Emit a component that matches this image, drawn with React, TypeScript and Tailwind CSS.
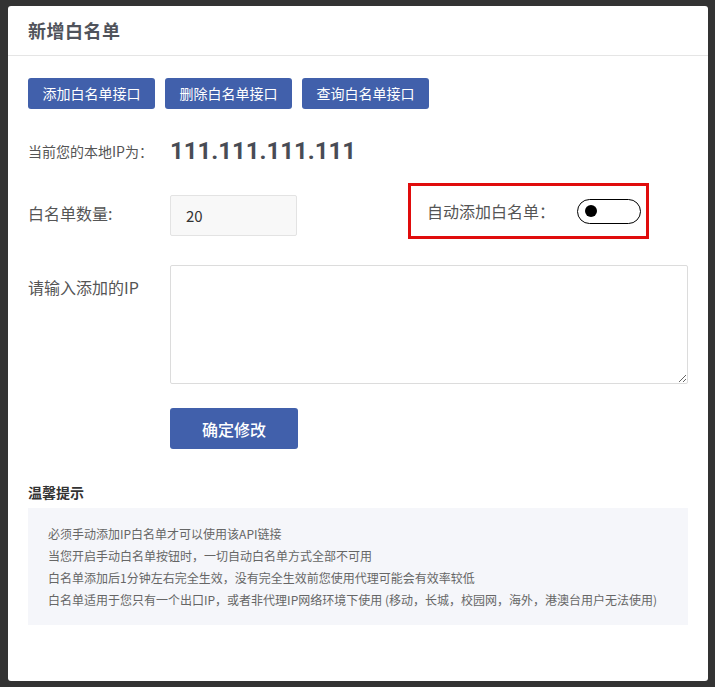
import { useState } from 'react';

const FONT = { fontFamily: '"Microsoft YaHei", "Noto Sans CJK SC", "Noto Sans", sans-serif' };

const API_BUTTONS = ['添加白名单接口', '删除白名单接口', '查询白名单接口'];

const TIPS = [
  '必须手动添加IP白名单才可以使用该API链接',
  '当您开启手动白名单按钮时，一切自动白名单方式全部不可用',
  '白名单添加后1分钟左右完全生效，没有完全生效前您使用代理可能会有效率较低',
  '白名单适用于您只有一个出口IP，或者非代理IP网络环境下使用 (移动，长城，校园网，海外，港澳台用户无法使用)',
];

function Toggle({ on, onChange }: { on: boolean; onChange: (v: boolean) => void }) {
  return (
    <button
      type="button"
      onClick={() => onChange(!on)}
      className={`flex items-center w-[64px] h-[25px] rounded-full border-[1.5px] border-black bg-white px-[7px] ${on ? 'justify-end' : 'justify-start'}`}
    >
      <span className="block w-[12px] h-[12px] rounded-full bg-black" />
    </button>
  );
}

export default function App() {
  const [count, setCount] = useState('20');
  const [auto, setAuto] = useState(false);
  const [ips, setIps] = useState('');

  return (
    <div className="w-[715px] h-[687px] bg-[#333333] pt-[6px] pl-[8px] overflow-hidden" style={FONT}>
      <div className="w-[700px] h-[675px] bg-white rounded-[3px]">
        {/* Header */}
        <div className="h-[50px] flex items-center px-[20px] border-b border-[#e5e5e5]">
          <h2 className="text-[18px] font-bold text-[#50535b] tracking-[0.5px]">新增白名单</h2>
        </div>

        <div className="px-[20px]">
          {/* API buttons */}
          <div className="flex gap-[10px] pt-[22px]">
            {API_BUTTONS.map(label => (
              <button
                key={label}
                type="button"
                className="w-[127px] h-[31px] rounded-[3px] bg-[#4160ab] text-white text-[14px]"
              >
                {label}
              </button>
            ))}
          </div>

          {/* Local IP */}
          <div className="flex items-center h-[42px] mt-[21px]">
            <span className="w-[142px] text-[14px] text-[#555]">当前您的本地IP为：</span>
            <span className="text-[24px] font-bold text-[#484c55]" style={{ fontFamily: 'Roboto, "Noto Sans", sans-serif' }}>
              111.111.111.111
            </span>
          </div>

          {/* Count + auto switch */}
          <div className="flex h-[56px] mt-[11px]">
            <span className="w-[142px] self-center text-[16px] text-[#555] mt-[4px]">白名单数量:</span>
            <input
              value={count}
              onChange={e => setCount(e.target.value)}
              className="w-[127px] h-[41px] mt-[12px] px-[15px] bg-[#f8f8f8] border border-[#e3e3e3] rounded-[2px] text-[15px] text-[#333] outline-none"
            />
            <div className="ml-[111px] w-[241px] h-[56px] border-[3px] border-[#e00c0c] flex items-center pl-[16px] gap-[22px]">
              <span className="text-[16px] text-[#555]">自动添加白名单：</span>
              <Toggle on={auto} onChange={setAuto} />
            </div>
          </div>

          {/* IP input */}
          <div className="flex mt-[26px]">
            <label className="w-[142px] pt-[10px] text-[16px] text-[#555]">请输入添加的IP</label>
            <textarea
              value={ips}
              onChange={e => setIps(e.target.value)}
              className="flex-1 h-[119px] border border-[#dcdcdc] rounded-[2px] p-[8px] text-[14px] outline-none"
            />
          </div>

          <div className="pl-[142px] mt-[24px]">
            <button type="button" className="w-[128px] h-[41px] rounded-[3px] bg-[#4160ab] text-white text-[16px] font-medium">
              确定修改
            </button>
          </div>

          {/* Tips */}
          <h3 className="mt-[33px] text-[14px] font-bold text-[#333] leading-[20px]">温馨提示</h3>
          <div className="mt-[6px] bg-[#f5f6fa] pt-[15px] pb-[14px] pl-[20px]">
            {TIPS.map(tip => (
              <p key={tip} className="text-[12px] leading-[22px] text-[#666] whitespace-nowrap">{tip}</p>
            ))}
          </div>
        </div>
      </div>
    </div>
  );
}
